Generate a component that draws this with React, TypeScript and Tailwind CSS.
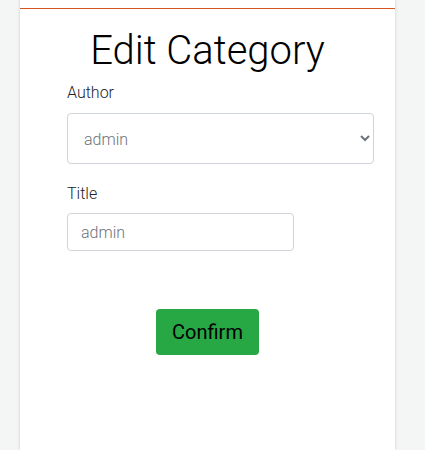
export default function App() {
  return (
    <div className="min-h-[450px] bg-[#f4f6f5] font-['Roboto',sans-serif]">
      <div className="mx-[20px] min-h-[450px] w-[375px] bg-white font-light shadow-[0_0_3px_rgba(0,0,0,0.18)]">
        <div className="h-[9px] border-b border-[#d9531e]" />
        <h1 className="mt-[18px] text-center text-[40px] font-light leading-[48px] text-black">
          Edit Category
        </h1>
        <form className="pt-[6px]" onSubmit={(e) => e.preventDefault()}>
          <div className="ml-[47px] w-[307px]">
            <label className="block text-[16px] leading-6 text-[#212529]">Author</label>
            <select
              defaultValue="admin"
              className="mt-[8px] block h-[51px] w-full rounded-[4px] border border-[#ced4da] bg-white pt-[2px] pr-[6px] pl-[12px] text-[16px] text-[#6c737a]"
            >
              <option value="admin">admin</option>
            </select>
            <label className="mt-[18px] block text-[16px] leading-6 text-[#212529]">Title</label>
            <input
              defaultValue="admin"
              className="mt-[7px] block h-[38px] w-[227px] rounded-[4px] border border-[#ced4da] bg-white px-[13px] text-[16px] text-[#6c737a]"
            />
          </div>
          <div className="mt-[58px] flex justify-center">
            <button
              type="submit"
              className="h-[46px] w-[103px] rounded-[4px] bg-[#28a745] text-[20px] font-normal text-black"
            >
              Confirm
            </button>
          </div>
        </form>
      </div>
    </div>
  );
}
